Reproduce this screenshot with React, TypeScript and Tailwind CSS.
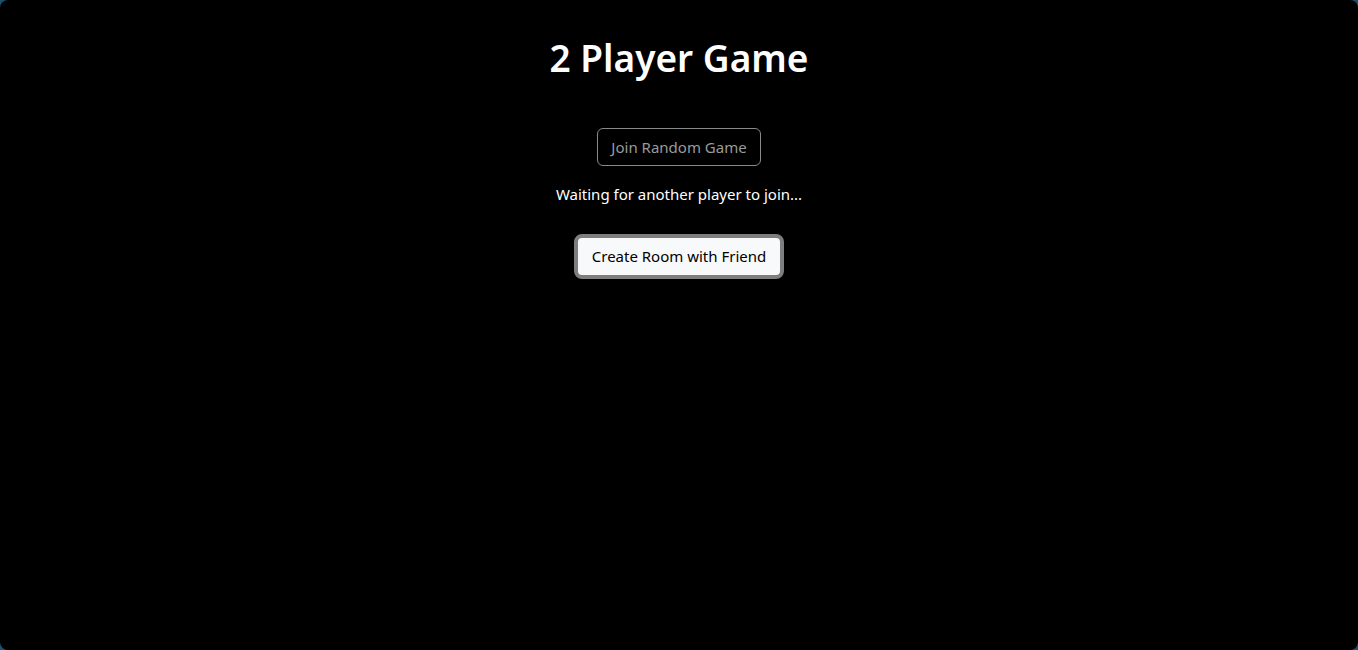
export default function App() {
  return (
    <div className="w-[1358px] h-[650px] bg-[#1d4f73]" style={{ fontFamily: '"Noto Sans", "Open Sans", sans-serif' }}>
      <div className="w-full h-full bg-black rounded-[8px] flex flex-col items-center">
        <h1 className="mt-[35px] text-[37px] leading-[46px] font-semibold text-white">2 Player Game</h1>
        <button className="mt-[47px] h-[38px] px-[13px] border border-[#8a8a8a] rounded-[6px] text-[#9a9a9a] text-[15px] bg-black">
          Join Random Game
        </button>
        <p className="mt-[17px] text-white text-[15px] leading-[22px]">Waiting for another player to join...</p>
        <button className="mt-[29px] h-[45px] px-[14px] border-[4px] border-[#7e7e7e] rounded-[8px] bg-[#f8f9fb] text-black text-[15px]">
          Create Room with Friend
        </button>
      </div>
    </div>
  );
}
